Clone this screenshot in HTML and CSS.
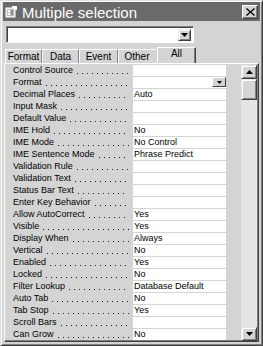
FILE: index.html
```html
<!DOCTYPE html>
<html>
<head>
<meta charset="utf-8">
<link rel="stylesheet" href="styles.css">
</head>
<body>
<div class="window">
  <div class="titlebar">
    <svg class="ticon" width="13" height="13" viewBox="0 0 13 13">
      <rect x="1" y="3" width="9" height="9" fill="#e8e8e8" stroke="#ffffff" stroke-width="1"/>
      <rect x="2" y="4" width="7" height="7" fill="#bdbdbd"/>
      <rect x="3" y="5" width="2" height="2" fill="#ffffff"/>
      <rect x="3" y="8" width="2" height="2" fill="#ffffff"/>
      <rect x="6" y="5" width="2" height="5" fill="#8a8a8a"/>
      <path d="M7 1 L12 1 L12 5 L10 5 L10 3 L7 3 Z" fill="#ffffff"/>
    </svg>
    <span class="title">Multiple selection</span>
    <div class="close">
      <svg width="9" height="8" viewBox="0 0 9 8"><path d="M1 0 L4.5 3.2 L8 0 L9 1 L5.5 4 L9 7 L8 8 L4.5 4.8 L1 8 L0 7 L3.5 4 L0 1 Z" fill="#000"/></svg>
    </div>
  </div>

  <div class="combo">
    <div class="combo-field"></div>
    <div class="btn dd">
      <svg width="7" height="4" viewBox="0 0 7 4"><path d="M0 0 H7 L3.5 4 Z" fill="#000"/></svg>
    </div>
  </div>

  <div class="tabs">
    <div class="tab t-format">Format</div>
    <div class="tab t-data">Data</div>
    <div class="tab t-event">Event</div>
    <div class="tab t-other">Other</div>
    <div class="tab sel">All</div>
  </div>

  <div class="panel">
    <div class="grid">
      <div class="row"><div class="lab"><span>Control Source</span><i class="dots"></i></div><div class="val"></div></div>
      <div class="row"><div class="lab"><span>Format</span><i class="dots"></i></div><div class="val"><span class="minibtn"><svg width="5" height="3" viewBox="0 0 5 3"><path d="M0 0 H5 L2.5 3 Z" fill="#000"/></svg></span></div></div>
      <div class="row"><div class="lab"><span>Decimal Places</span><i class="dots"></i></div><div class="val">Auto</div></div>
      <div class="row"><div class="lab"><span>Input Mask</span><i class="dots"></i></div><div class="val"></div></div>
      <div class="row"><div class="lab"><span>Default Value</span><i class="dots"></i></div><div class="val"></div></div>
      <div class="row"><div class="lab"><span>IME Hold</span><i class="dots"></i></div><div class="val">No</div></div>
      <div class="row"><div class="lab"><span>IME Mode</span><i class="dots"></i></div><div class="val">No Control</div></div>
      <div class="row"><div class="lab"><span>IME Sentence Mode</span><i class="dots"></i></div><div class="val">Phrase Predict</div></div>
      <div class="row"><div class="lab"><span>Validation Rule</span><i class="dots"></i></div><div class="val"></div></div>
      <div class="row"><div class="lab"><span>Validation Text</span><i class="dots"></i></div><div class="val"></div></div>
      <div class="row"><div class="lab short"><span>Status Bar Text</span><i class="dots"></i></div><div class="val"></div></div>
      <div class="row"><div class="lab"><span>Enter Key Behavior</span><i class="dots"></i></div><div class="val"></div></div>
      <div class="row"><div class="lab"><span>Allow AutoCorrect</span><i class="dots"></i></div><div class="val">Yes</div></div>
      <div class="row"><div class="lab"><span>Visible</span><i class="dots"></i></div><div class="val">Yes</div></div>
      <div class="row"><div class="lab"><span>Display When</span><i class="dots"></i></div><div class="val">Always</div></div>
      <div class="row"><div class="lab"><span>Vertical</span><i class="dots"></i></div><div class="val">No</div></div>
      <div class="row"><div class="lab"><span>Enabled</span><i class="dots"></i></div><div class="val">Yes</div></div>
      <div class="row"><div class="lab"><span>Locked</span><i class="dots"></i></div><div class="val">No</div></div>
      <div class="row"><div class="lab"><span>Filter Lookup</span><i class="dots"></i></div><div class="val">Database Default</div></div>
      <div class="row"><div class="lab"><span>Auto Tab</span><i class="dots"></i></div><div class="val">No</div></div>
      <div class="row"><div class="lab"><span>Tab Stop</span><i class="dots"></i></div><div class="val">Yes</div></div>
      <div class="row"><div class="lab"><span>Scroll Bars</span><i class="dots"></i></div><div class="val"></div></div>
      <div class="row"><div class="lab"><span>Can Grow</span><i class="dots"></i></div><div class="val">No</div></div>
    </div>
    <div class="scrollbar">
      <div class="btn sbtn"><svg width="7" height="4" viewBox="0 0 7 4"><path d="M3.5 0 L7 4 H0 Z" fill="#000"/></svg></div>
      <div class="btn thumb"></div>
      <div class="track"></div>
      <div class="btn sbtn"><svg width="7" height="4" viewBox="0 0 7 4"><path d="M0 0 H7 L3.5 4 Z" fill="#000"/></svg></div>
    </div>
  </div>
</div>
</body>
</html>
```

FILE: styles.css
```css
html, body {
  margin: 0;
  padding: 0;
  background: #d4d4d4;
}
body {
  width: 263px;
  height: 346px;
  overflow: hidden;
  font-family: "Liberation Sans", Arial, sans-serif;
}
.window {
  box-sizing: border-box;
  width: 263px;
  height: 346px;
  background: #d4d4d4;
  border-top: 1px solid #e0e0e0;
  border-left: 1px solid #e0e0e0;
  border-right: 1px solid #404040;
  border-bottom: 1px solid #404040;
  box-shadow: inset 1px 1px 0 #ffffff, inset -1px -1px 0 #808080;
  padding: 1px 2px 2px 2px;
  display: flex;
  flex-direction: column;
}
.titlebar {
  height: 19px;
  background: #6a6a6a;
  display: flex;
  align-items: center;
  padding: 0 2px 0 2px;
}
.ticon {
  flex: none;
  margin-right: 4px;
}
.title {
  color: #ffffff;
  font-size: 15px;
  flex: 1;
  line-height: 19px;
  margin-top: 1px;
}
.close {
  box-sizing: border-box;
  width: 16px;
  height: 14px;
  background: #d4d4d4;
  border-top: 1px solid #ffffff;
  border-left: 1px solid #ffffff;
  border-right: 1px solid #404040;
  border-bottom: 1px solid #404040;
  box-shadow: inset -1px -1px 0 #808080;
  display: flex;
  align-items: center;
  justify-content: center;
}
.btn {
  box-sizing: border-box;
  background: #d4d4d4;
  border-top: 1px solid #e8e8e8;
  border-left: 1px solid #e8e8e8;
  border-right: 1px solid #404040;
  border-bottom: 1px solid #404040;
  box-shadow: inset 1px 1px 0 #ffffff, inset -1px -1px 0 #808080;
  display: flex;
  align-items: center;
  justify-content: center;
}
.combo {
  box-sizing: border-box;
  margin: 5px 0 0 3px;
  width: 188px;
  height: 17px;
  background: #ffffff;
  border-top: 1px solid #808080;
  border-left: 1px solid #808080;
  border-right: 1px solid #ffffff;
  border-bottom: 1px solid #ffffff;
  box-shadow: inset 1px 1px 0 #404040;
  display: flex;
  padding: 2px 2px 2px 2px;
}
.combo-field {
  flex: 1;
}
.dd {
  width: 13px;
  height: 12px;
}
.tabs {
  margin-top: 4px;
  height: 16px;
  display: flex;
  align-items: flex-end;
  padding-left: 2px;
  font-size: 10px;
}
.tab {
  box-sizing: border-box;
  height: 14px;
  line-height: 13px;
  text-align: center;
  border-left: 1px solid #ffffff;
  border-top: 1px solid #ffffff;
  border-right: 1px solid #808080;
  color: #000;
}
.t-format { width: 37px; }
.t-data { width: 37px; }
.t-event { width: 39px; }
.t-other { width: 38px; border-right-color: transparent; }
.tab.sel {
  width: 39px;
  height: 16px;
  line-height: 12px;
  margin-left: 1px;
  border-right: 1px solid #404040;
  box-shadow: inset -1px 0 0 #808080;
  background: #d4d4d4;
}
.panel {
  flex: 1;
  display: flex;
  border-top: 1px solid #ffffff;
  border-left: 1px solid #ffffff;
  border-right: 1px solid #404040;
  border-bottom: 1px solid #404040;
  box-shadow: inset -1px -1px 0 #808080;
  margin: 0 1px 1px 1px;
  padding: 1px 2px 0 2px;
}
.grid {
  width: 219px;
  display: flex;
  flex-direction: column;
  font-size: 9px;
}
.row {
  display: flex;
  height: 12px;
}
.lab {
  box-sizing: border-box;
  width: 126px;
  padding: 0 4px 0 6px;
  display: flex;
  white-space: nowrap;
  line-height: 11px;
  color: #000;
}
.lab.short {
  padding-right: 8px;
}
.dots {
  flex: 1;
  margin-left: 3px;
  height: 11px;
  background-image: linear-gradient(90deg, #1a1a1a 1px, transparent 1px);
  background-size: 5px 1px;
  background-repeat: repeat-x;
  background-position: 1px 8px;
}
.val {
  width: 93px;
  height: 11px;
  background: #ffffff;
  line-height: 11px;
  padding-left: 1px;
  box-sizing: border-box;
  white-space: nowrap;
  display: flex;
}
.minibtn {
  box-sizing: border-box;
  margin-left: auto;
  width: 14px;
  height: 10px;
  background: #d4d4d4;
  border-right: 1px solid #404040;
  border-bottom: 1px solid #404040;
  border-top: 1px solid #ffffff;
  border-left: 1px solid #ffffff;
  display: flex;
  align-items: center;
  justify-content: center;
}
.scrollbar {
  margin-left: 15px;
  width: 16px;
  display: flex;
  flex-direction: column;
  background: #e4e4e4;
}
.sbtn {
  width: 16px;
  height: 14px;
}
.thumb {
  width: 16px;
  height: 21px;
}
.track {
  flex: 1;
}
```
